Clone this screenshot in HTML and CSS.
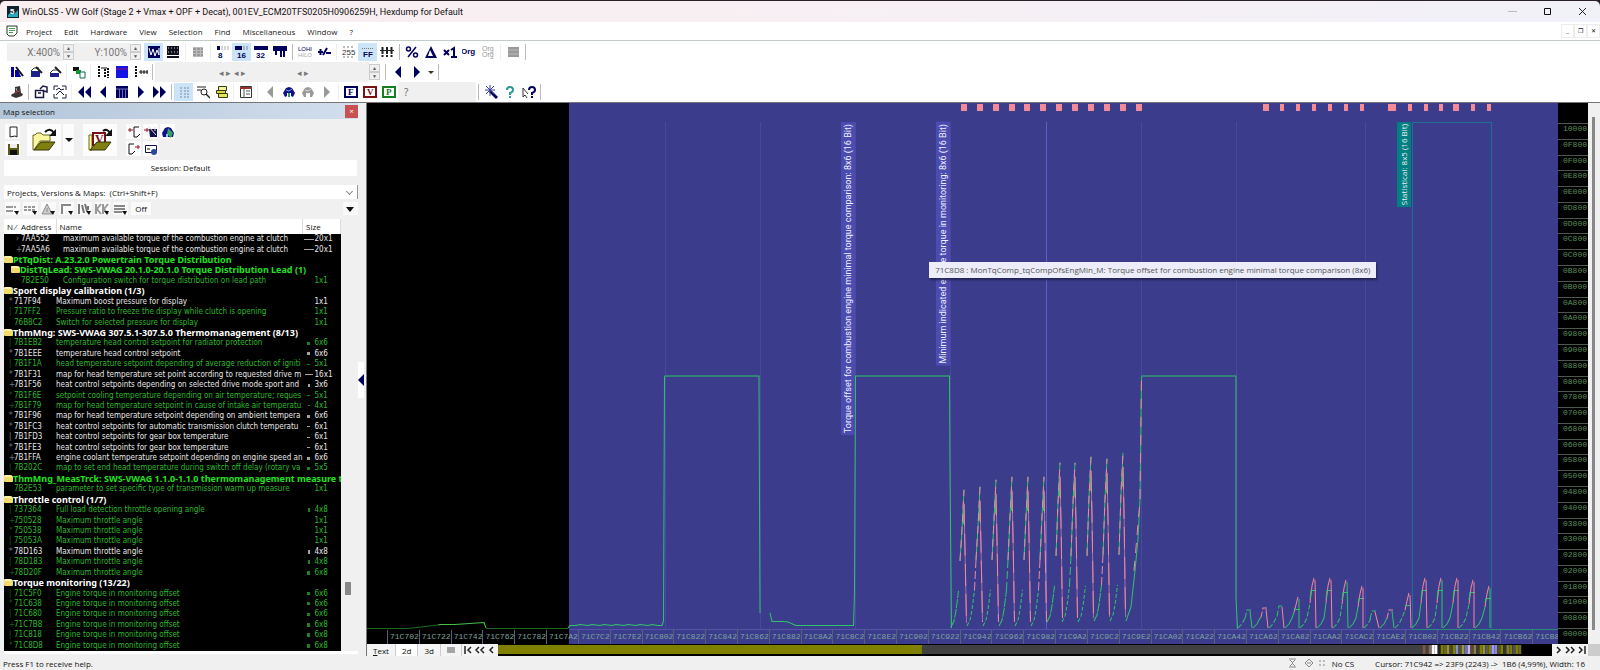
FILE: index.html
```html
<!DOCTYPE html>
<html lang="en">
<head>
    <meta charset="UTF-8">
    <title>WinOLS5 - VW Golf</title>
    <link rel="stylesheet" href="styles.css">
</head>
<body>
<div class="window">
    <header class="titlebar">
        <svg class="logo" viewBox="0 0 12 12"><rect width="12" height="12" fill="#10202c"/><path d="M1 9l3-3 3 2 4-4v7H1z" fill="#2aa7b8"/><text x="3" y="8" font-size="8" font-weight="bold" fill="#fff">5</text></svg>
        <h1>WinOLS5 - VW Golf (Stage 2 + Vmax + OPF + Decat), 001EV_ECM20TFS0205H0906259H, Hexdump for Default</h1>
        <div class="winbtns">
            <button aria-label="Minimize"><svg viewBox="0 0 9 9"><path d="M0 4.500h9" stroke="#bbb"/></svg></button>
            <button aria-label="Maximize"><svg viewBox="0 0 9 9"><path d="M1.500 1.500h6v6h-6z" fill="none" stroke="#111"/></svg></button>
            <button aria-label="Close"><svg viewBox="0 0 9 9"><path d="M1 1l7 7M8 1L1 8" stroke="#222"/></svg></button>
        </div>
    </header>

    <nav class="menubar">
        <svg class="docicon" viewBox="0 0 12 12"><path d="M1 1h10v7l-3 3H3L1 9z" fill="#fff" stroke="#243a24"/><path d="M3 3.500h6M3 5.500h6M3 7.500h4" stroke="#4a9a4a"/></svg>
        <a href="#">Project</a>
        <a href="#">Edit</a>
        <a href="#">Hardware</a>
        <a href="#">View</a>
        <a href="#">Selection</a>
        <a href="#">Find</a>
        <a href="#">Miscellaneous</a>
        <a href="#">Window</a>
        <a href="#">?</a>
        <div class="mdibtns">
            <button aria-label="Minimize child">_</button>
            <button aria-label="Restore child">❐</button>
            <button aria-label="Close child">✕</button>
        </div>
    </nav>

    <div class="toolbars">
        <div class="strip strip-a">
            <label class="zoomfield">X:<input type="text" value="400%"></label>
            <span class="spin"><button aria-label="X up">▲</button><button aria-label="X down">▼</button></span>
            <label class="zoomfield">Y:<input type="text" value="100%"></label>
            <span class="spin"><button aria-label="Y up">▲</button><button aria-label="Y down">▼</button></span>
            <i class="gap"></i>
            <button class="tb on" aria-label="Curve"><svg viewBox="0 0 14 14"><path d="M1 1h12v12H1z" fill="#00005c"/><path d="M2 3l2 7 2-6 2 7 2-6 2 5V3" fill="none" stroke="#fff"/></svg></button>
            <button class="tb" aria-label="Bars"><svg viewBox="0 0 14 14"><path d="M1 1h12v12H1z" fill="#101020"/><path d="M2 3h10M2 7h10" stroke="#ccc" stroke-dasharray="1 2"/><path d="M1 10.500h12" stroke="#fff"/></svg></button>
            <i class="sep"></i>
            <button class="tb" aria-label="Columns"><svg viewBox="0 0 14 14"><path d="M2 2h10v10H2z" fill="#bbb"/><path d="M2 4h10M2 7h10M2 10h10" stroke="#777" stroke-dasharray="3 1"/></svg></button>
            <i class="sep"></i>
            <button class="tb" aria-label="8 bit"><svg viewBox="0 0 14 14"><path d="M1 1h3v4H1z"/><path d="M5 2h9M5 4h9" stroke="#aaa" stroke-dasharray="2 1"/><text x="2" y="13" font-size="8" font-weight="bold">8</text></svg></button>
            <button class="tb on" aria-label="16 bit"><svg viewBox="0 0 14 14"><path d="M0 1h7v4H0z"/><path d="M8 2h6M8 4h6" stroke="#888" stroke-dasharray="2 1"/><text x="2" y="13" font-size="8" font-weight="bold">16</text></svg></button>
            <button class="tb" aria-label="32 bit"><svg viewBox="0 0 14 14"><path d="M0 1h14v4H0z"/><text x="2" y="13" font-size="8" font-weight="bold">32</text></svg></button>
            <button class="tb" aria-label="Float"><svg viewBox="0 0 14 14"><path d="M0 1h14v5H0z"/><path d="M3 6v4M8 6v6M11 6v6" stroke="#00005c" stroke-width="2"/></svg></button>
            <i class="sep line"></i>
            <button class="tb" aria-label="Low high"><svg viewBox="0 0 14 14"><text x="0" y="6" font-size="6">LOHI</text><text x="0" y="12" font-size="6" fill="#aaa">HILO</text></svg></button>
            <button class="tb" aria-label="Sign"><svg viewBox="0 0 14 14"><path d="M1 7h5M3.500 4v6M6 10l4-7M9 8h5" stroke="#00005c" stroke-width="2"/></svg></button>
            <i class="sep"></i>
            <button class="tb" aria-label="Decimal"><svg viewBox="0 0 14 14"><path d="M1 2h12M1 12h12" stroke="#777" stroke-dasharray="2 2"/><text x="0" y="10" font-size="8" fill="#333">255</text></svg></button>
            <button class="tb on" aria-label="Hex"><svg viewBox="0 0 14 14"><path d="M1 3.500h12" stroke="#777" stroke-dasharray="1 1"/><text x="2" y="12" font-size="8" font-weight="bold">FF</text></svg></button>
            <button class="tb" aria-label="Binary"><svg viewBox="0 0 14 14"><path d="M2.500 2v10M7 2v10M11.500 2v10" stroke="#222" stroke-width="2" stroke-dasharray="3 1"/><path d="M0 5.500h14" stroke="#222"/></svg></button>
            <i class="sep line"></i>
            <button class="tb" aria-label="Percent"><svg viewBox="0 0 14 14"><path d="M3 12L11 2" stroke="#00005c" stroke-width="1.500"/><circle cx="3.500" cy="4" r="2" fill="none" stroke="#00005c" stroke-width="1.500"/><circle cx="10.500" cy="10" r="2" fill="none" stroke="#00005c" stroke-width="1.500"/></svg></button>
            <button class="tb" aria-label="Delta"><svg viewBox="0 0 14 14"><path d="M7 1l6 12H1zM6 5l-2 6h5z" fill-rule="evenodd"/></svg></button>
            <button class="tb" aria-label="Factor"><svg viewBox="0 0 14 14"><path d="M1 5l5 5M6 5l-5 5M8 5l3-2v9M8 12h6" fill="none" stroke="#00005c" stroke-width="2"/></svg></button>
            <button class="tb" aria-label="Original"><svg viewBox="0 0 14 14"><text x="-1" y="9" font-size="8" font-weight="bold">Org</text></svg></button>
            <button class="tb" aria-label="Original both"><svg viewBox="0 0 14 14"><text x="1" y="6" font-size="7" fill="#999">Org</text><text x="1" y="12" font-size="7" fill="#999">Org</text></svg></button>
            <i class="sep"></i>
            <button class="tb" aria-label="List"><svg viewBox="0 0 14 14"><path d="M2 2h11v10H2z" fill="#999"/><path d="M2 5h11M2 9h11" stroke="#bbb"/></svg></button>
            <i class="sep line"></i>
        </div>

        <div class="strip strip-b">
            <button class="tb" aria-label="Wizard"><svg viewBox="0 0 14 14"><path d="M1 2h3v10H1zM5 5h3l3 7H5z" fill="#0000a0"/><path d="M6 2l7 9" stroke="#111" stroke-width="2"/></svg></button>
            <button class="tb" aria-label="Open map"><svg viewBox="0 0 14 14"><path d="M2 6h9v6H2z" fill="#20208c"/><path d="M2 6l3-3h5" fill="none" stroke="#333"/><path d="M7 2l6 6" stroke="#222" stroke-width="2"/></svg></button>
            <button class="tb" aria-label="Next map"><svg viewBox="0 0 14 14"><path d="M2 8h9v4H2z" fill="#20208c"/><path d="M2 8l3-3h4" fill="none" stroke="#333"/><path d="M7 2l6 6" stroke="#222" stroke-width="2"/></svg></button>
            <i class="sep"></i>
            <button class="tb" aria-label="Copy"><svg viewBox="0 0 14 14"><path d="M1 2h6v4H1z" fill="#111"/><path d="M4 5h5v4H4z" fill="#0a9a2a"/><path d="M8 7h5v6H8z" fill="#fff" stroke="#0a6a5a"/></svg></button>
            <i class="sep"></i>
            <button class="tb" aria-label="Swap"><svg viewBox="0 0 14 14"><path d="M3 1v12M9 4v9M12 3v10" stroke="#111" stroke-width="2" stroke-dasharray="2 1"/><path d="M5 3h6" stroke="#111"/></svg></button>
            <button class="tb" aria-label="Fill"><svg viewBox="0 0 14 14"><path d="M1 1h12v12H1z" fill="#1414e6"/><path d="M1 4h12" stroke="#901070"/></svg></button>
            <button class="tb" aria-label="Insert"><svg viewBox="0 0 14 14"><path d="M2 1v12" stroke="#111" stroke-width="2" stroke-dasharray="2 1"/><path d="M5 7h9M7 5v4M10 5v4M13 5v4" stroke="#111"/></svg></button>
            <i class="sep line"></i>
            <div class="slot"><span>◂ ▸ ◂ ▸</span><span>◂ ▸</span></div>
            <span class="spin"><button aria-label="Step up">▲</button><button aria-label="Step down">▼</button></span>
            <i class="gap"></i>
            <i class="sep line"></i>
            <button class="tb" aria-label="Previous"><svg viewBox="0 0 14 14"><path d="M10 1v12L4 7z"/></svg></button>
            <button class="tb" aria-label="Next"><svg viewBox="0 0 14 14"><path d="M4 1v12l6-6z"/></svg></button>
            <button class="tb slim" aria-label="More"><svg viewBox="0 0 14 14"><path d="M4 6h6l-3 3z" fill="#333"/></svg></button>
            <i class="sep line"></i>
        </div>

        <div class="strip strip-c">
            <button class="tb" aria-label="Agent"><svg viewBox="0 0 14 14"><path d="M5 2l5-1 1 7 2 1-1 2-6 2-5-2 1-2 3-1z" fill="#3a3434"/><path d="M4 8l6-2" stroke="#a04040"/><path d="M6 3l1 3" stroke="#aaa"/></svg></button>
            <i class="sep line"></i>
            <button class="tb" aria-label="Properties"><svg viewBox="0 0 14 14"><path d="M1.500 5.500h8v7h-8zM4 8h3M6 4l3-3 4 1v5l-3-1" fill="none" stroke="#1a1a40" stroke-width="1.500"/></svg></button>
            <button class="tb" aria-label="Picture"><svg viewBox="0 0 14 14"><path d="M1 1h4M9 1h4M1 13h4M9 13h4M1 1v4M1 9v4M13 1v4M13 9v4M3 5l3-2 2 2 3-1M3 10l4-4 4 4" fill="none" stroke="#1a1a40"/></svg></button>
            <i class="sep"></i>
            <button class="tb" aria-label="First"><svg viewBox="0 0 14 14"><path d="M7 1v12L1 7zM14 1v12L8 7z"/></svg></button>
            <button class="tb" aria-label="Back"><svg viewBox="0 0 14 14"><path d="M10 1v12L4 7z"/></svg></button>
            <button class="tb" aria-label="Map grid"><svg viewBox="0 0 14 14"><path d="M1 1h12v12H1z"/><path d="M1 4h12M4.500 4v9M7.500 4v9M10.500 4v9" stroke="#6a6ab8"/></svg></button>
            <button class="tb" aria-label="Forward"><svg viewBox="0 0 14 14"><path d="M4 1v12l6-6z"/></svg></button>
            <button class="tb" aria-label="Last"><svg viewBox="0 0 14 14"><path d="M0 1v12l6-6zM7 1v12l6-6z"/></svg></button>
            <i class="sep line"></i>
            <button class="tb on" aria-label="Tree"><svg viewBox="0 0 14 14"><path d="M4 2v11M7 3h6M7 6h6M7 9h6M7 12h6" stroke="#7a8aa8" stroke-dasharray="2 1"/></svg></button>
            <button class="tb" aria-label="Search list"><svg viewBox="0 0 14 14"><path d="M1 2h9M1 5h4" stroke="#222"/><circle cx="8" cy="7" r="3" fill="none" stroke="#222"/><path d="M10 9l4 4" stroke="#222" stroke-width="1.500"/></svg></button>
            <button class="tb" aria-label="Print"><svg viewBox="0 0 14 14"><path d="M3.500 1.500h8v4h-8z" fill="#f4f2a0" stroke="#333a10"/><path d="M1.500 5.500h9v3h-9z" fill="#d8d640" stroke="#333a10"/><path d="M3.500 8.500h9v4h-9z" fill="#e6e45a" stroke="#333a10"/></svg></button>
            <i class="sep"></i>
            <button class="tb" aria-label="Window layout"><svg viewBox="0 0 14 14"><path d="M1.500 1.500h11v11h-11z" fill="#fff" stroke="#333"/><path d="M1 3h12" stroke="#933" stroke-width="2"/><path d="M5 4v9M7 6h4M7 9h4" stroke="#555"/></svg></button>
            <i class="sep"></i>
            <button class="tb" aria-label="Find previous"><svg viewBox="0 0 14 14"><path d="M10 1v12L4 7z" fill="#999"/></svg></button>
            <button class="tb" aria-label="Find"><svg viewBox="0 0 14 14"><path d="M1 8l3-5 3-1 3 1 3 5-2 4-2-1V8H5v3l-2 1z" fill="#10108a"/><path d="M6 8h2v4H6z" fill="#3a9a6a"/><path d="M4 5l3 1 3-2" stroke="#7ab" fill="none"/></svg></button>
            <button class="tb" aria-label="Find again"><svg viewBox="0 0 14 14"><path d="M1 8l3-5 3-1 3 1 3 5-2 4H9V8H5v4H3z" fill="#999"/><path d="M4 5l3 1 3-2" stroke="#ddd" fill="none"/></svg></button>
            <button class="tb" aria-label="Find next"><svg viewBox="0 0 14 14"><path d="M4 1v12l6-6z" fill="#999"/></svg></button>
            <i class="sep"></i>
            <button class="tb" aria-label="F window"><svg viewBox="0 0 14 14"><path d="M1 2h12v10H1z" fill="#fff" stroke="#00005c" stroke-width="2"/><text class="srf" x="4" y="10" font-size="9" font-weight="bold">F</text></svg></button>
            <button class="tb" aria-label="V window"><svg viewBox="0 0 14 14"><path d="M1 2h12v10H1z" fill="#fff" stroke="#7a1018" stroke-width="2"/><text class="srf" x="4" y="10" font-size="9" font-weight="bold" fill="#7a1018">V</text></svg></button>
            <button class="tb" aria-label="P window"><svg viewBox="0 0 14 14"><path d="M1 2h12v10H1z" fill="#fff" stroke="#108020" stroke-width="2"/><text class="srf" x="4" y="10" font-size="9" font-weight="bold" fill="#108020">P</text></svg></button>
            <span class="query">?</span>
            <i class="sep line"></i>
            <button class="tb" aria-label="Magic"><svg viewBox="0 0 14 14"><path d="M6 6l7 7" stroke="#00005c" stroke-width="3"/><path d="M6 0v11M1 5h10M2 1l8 8M10 1L2 9" stroke="#3a3aa0"/></svg></button>
            <button class="tb" aria-label="Help"><svg viewBox="0 0 14 14"><path d="M4 5q0-3 3-3t3 3q0 2-3 3v2M7 11v2" fill="none" stroke="#2a9a98" stroke-width="2"/></svg></button>
            <button class="tb" aria-label="Context help"><svg viewBox="0 0 14 14"><path d="M1 3v9l2-2 2 3M1 3l5 6" fill="none" stroke="#333"/><path d="M7 5q0-3 3-3t3 3q0 2-3 3v2M10 11v2" fill="none" stroke="#00005c" stroke-width="2"/></svg></button>
            <i class="sep line"></i>
        </div>
    </div>

    <main class="work">
        <aside class="panel">
            <div class="panelhead"><h2>Map selection</h2><button aria-label="Close panel">×</button></div>
            <div class="panelbody">
                <div class="actions">
                    <div class="stack">
                        <button class="sm" aria-label="New"><svg viewBox="0 0 14 14"><path d="M4 2h7v10l-2-1-5 1z" fill="#fff" stroke="#222"/></svg></button>
                        <button class="sm" aria-label="Save"><svg viewBox="0 0 14 14"><path d="M2 2h11v11H2z" fill="#5a5a10"/><path d="M4 2h7v4H4z" fill="#eee"/><path d="M4 8h7v5H4z" fill="#111"/></svg></button>
                    </div>
                    <button class="big" aria-label="Open project"><svg viewBox="0 0 26 26"><path d="M2 8h2l2-2h4l2 2h7v6H9l-6 9H2z" fill="#fbf6a0" stroke="#6a6a1a"/><path d="M3 23l7-8h14l-6 8z" fill="#808010" stroke="#33330a"/><path d="M14 5q5-5 9 1" fill="none" stroke="#111" stroke-width="2"/><path d="M25 2v7h-7z" fill="#111"/></svg></button>
                    <button class="drop" aria-label="Recent"><svg viewBox="0 0 10 10"><path d="M1 3h8L5 7z" fill="#111"/></svg></button>
                    <button class="big ver" aria-label="Open version"><svg viewBox="0 0 26 26"><path d="M2 8h3v15H2z" fill="#fbf6a0" stroke="#6a6a1a"/><path d="M6 6h12v12H6z" fill="#fff" stroke="#7a1018" stroke-width="2"/><text class="srf" x="8" y="16" font-size="12" fill="#7a1018" font-weight="bold">V</text><path d="M3 23l7-8h14l-6 8z" fill="#808010" stroke="#33330a"/><path d="M16 4q4-3 7 2" fill="none" stroke="#111" stroke-width="2"/><path d="M25 2v7h-7z" fill="#111"/></svg></button>
                    <div class="quad">
                        <button class="sm" aria-label="Import"><svg viewBox="0 0 14 14"><path d="M12 2H7v10h3M10 12l3-3" fill="none" stroke="#111"/><path d="M1 5h5M3 3v4" stroke="#a01020"/></svg></button>
                        <button class="sm" aria-label="Import wizard"><svg viewBox="0 0 14 14"><path d="M5 4h8v8H6z" fill="#10104a"/><path d="M5 2l7 8M11 2v4" stroke="#ddd"/><path d="M0 5h5M3 3v4" stroke="#a01020"/></svg></button>
                        <button class="sm" aria-label="Find map"><svg viewBox="0 0 14 14"><path d="M1 8l3-5 3-1 3 1 3 5-1 4H2z" fill="#10108a"/><path d="M7 3l5 5-2 5-4-4z" fill="#35a55a"/><path d="M5 9h2v3H5z" fill="#8cf"/></svg></button>
                        <button class="sm" aria-label="Export"><svg viewBox="0 0 14 14"><path d="M7 2H2v10h3l3-3" fill="none" stroke="#111"/><path d="M8 5h5M11 3v4" stroke="#a01020"/></svg></button>
                        <button class="sm" aria-label="Mail"><svg viewBox="0 0 14 14"><path d="M1.500 3.500h11v7h-11z" fill="#fff" stroke="#10104a"/><path d="M3 6h3v2H3z" fill="#888"/><circle cx="10" cy="10" r="3" fill="#2a4aa0"/></svg></button>
                    </div>
                </div>
                <div class="session">Session: Default</div>
                <div class="combo"><select aria-label="Filter"><option>Projects, Versions &amp; Maps:&nbsp; (Ctrl+Shift+F)</option></select></div>
                <div class="filters">
                    <button aria-label="Equal"><svg viewBox="0 0 14 12"><path d="M1 4h7M1 8h7M10 3v2" stroke="#999" stroke-width="2"/><path d="M9 8h5l-2 4z" fill="#111"/></svg></button>
                    <button aria-label="Ruler"><svg viewBox="0 0 14 12"><path d="M1 4h11M1 7h11" stroke="#999" stroke-width="2" stroke-dasharray="3 1"/><path d="M9 8h5l-2 4z" fill="#111"/></svg></button>
                    <button aria-label="Difference"><svg viewBox="0 0 14 12"><path d="M6 1l5 10H1zM6 5v4" fill="#ccc" stroke="#888"/><path d="M9 8h5l-2 4z" fill="#111"/></svg></button>
                    <button aria-label="Shape"><svg viewBox="0 0 14 12"><path d="M3 11V2h9" fill="none" stroke="#888" stroke-width="2"/><path d="M9 8h5l-2 4z" fill="#111"/></svg></button>
                    <button aria-label="Flags"><svg viewBox="0 0 14 12"><path d="M2 1v10M5 2l2 8M8 1l2 7M11 3v4" stroke="#777" stroke-width="2"/><path d="M9 8h5l-2 4z" fill="#111"/></svg></button>
                    <button aria-label="Kinds"><svg viewBox="0 0 14 12"><path d="M1 1v10M6 1L2 6l4 5M8 1v10M13 1L9 6l4 5" fill="none" stroke="#999" stroke-width="2"/><path d="M9 8h5l-2 4z" fill="#111"/></svg></button>
                    <button aria-label="Lines"><svg viewBox="0 0 14 12"><path d="M1 3h11M1 6h11M1 9h8" stroke="#888" stroke-width="2"/><path d="M9 8h5l-2 4z" fill="#111"/></svg></button>
                    <button class="off">Off</button>
                    <button class="last" aria-label="Filter menu"><svg viewBox="0 0 14 12"><path d="M3 4h8l-4 5z" fill="#111"/></svg></button>
                </div>
                <div class="listwrap">
                    <div class="list">
                        <table>
                            <colgroup><col class="caddr"><col><col class="csize"></colgroup>
                            <thead><tr><th><i>N ⁄</i>Address</th><th>Name</th><th>Size</th></tr></thead>
                            <tbody id="maps"></tbody>
                        </table>
                    </div>
                    <div class="vscroll"><i></i></div>
                </div>
            </div>
        </aside>
        <button class="splitter" aria-label="Collapse panel"><svg viewBox="0 0 6 36"><path d="M0 0h6v36H0z" fill="#fff"/><path d="M6 12v12L0 18z" fill="#00005c"/></svg></button>

        <section class="view">
            <div class="chartrow">
                <div class="chart">
                    <svg id="plot" viewBox="0 0 1191 526" preserveAspectRatio="none"></svg>
                    <div class="xaxis" id="xaxis"></div>
                    <span class="vlabel v1">Torque offset for combustion engine minimal torque comparison: 8x6 (16 Bit)</span>
                    <span class="vlabel v2">Minimum indicated engine torque in monitoring: 8x6 (16 Bit)</span>
                    <span class="vlabel v3">Statistical: 8x5 (16 Bit)</span>
                    <div class="tip">71C8D8 : MonTqComp_tqCompOfsEngMin_M: Torque offset for combustion engine minimal torque comparison (8x6)</div>
                </div>
                <div class="yaxis" id="yaxis"></div>
                <div class="rscroll"><i></i></div>
            </div>
            <div class="tabs">
                <button class="tab"><u>T</u>ext</button>
                <button class="tab cur">2d</button>
                <button class="tab">3d</button>
                <button class="tab" aria-label="Tab list"><svg viewBox="0 0 8 6"><path d="M0 1h8M0 3h8M0 5h8" stroke="#555"/></svg></button>
                <button class="nav" aria-label="First"><svg viewBox="0 0 10 10"><path d="M2 1v8M8 2L5 5l3 3" fill="none" stroke="#222" stroke-width="1.500"/></svg></button>
                <button class="nav" aria-label="Page back"><svg viewBox="0 0 10 10"><path d="M4 2L1 5l3 3M9 2L6 5l3 3" fill="none" stroke="#222" stroke-width="1.500"/></svg></button>
                <button class="nav" aria-label="Step back"><svg viewBox="0 0 10 10"><path d="M6 2L3 5l3 3" fill="none" stroke="#222" stroke-width="1.500"/></svg></button>
                <svg class="overview" id="overview" viewBox="0 0 1059 12" preserveAspectRatio="none"></svg>
                <button class="nav" aria-label="Step forward"><svg viewBox="0 0 10 10"><path d="M4 2l3 3-3 3" fill="none" stroke="#222" stroke-width="1.500"/></svg></button>
                <button class="nav" aria-label="Page forward"><svg viewBox="0 0 10 10"><path d="M1 2l3 3-3 3M6 2l3 3-3 3" fill="none" stroke="#222" stroke-width="1.500"/></svg></button>
                <button class="nav" aria-label="End"><svg viewBox="0 0 10 10"><path d="M2 2l3 3-3 3M8 1v8" fill="none" stroke="#222" stroke-width="1.500"/></svg></button>
                <i class="corner"></i>
            </div>
        </section>
    </main>

    <footer class="status">
        <span class="msg">Press F1 to receive help.</span>
        <svg viewBox="0 0 40 10"><path d="M1 1h7M1 9h7M2 2l3 3-3 3M7 2L4 5M7 8L4 5M17 5l4-4 4 4-4 4zM19 5h4M32 2v2M36 2v2M32 6v2M36 6v2" fill="none" stroke="#888"/></svg>
        <span class="cs">No CS</span>
        <span>Cursor: 71C942 =&gt; 23F9 (2243) -&gt;&nbsp; 1B6 (4,99%), Width: 16</span>
    </footer>
</div>
<script src="script.js"></script>
</body>
</html>
```
FILE: styles.css
```css
* {
    box-sizing: border-box;
    margin: 0;
    padding: 0;
}
body {
    background: #2a2028;
    font-family: "Open Sans", "Noto Sans", sans-serif;
    font-size: 8px;
    color: #111;
}
button, input, select {
    font: inherit;
    color: inherit;
    border: 0;
    background: none;
}
svg {
    display: block;
}
i {
    font-style: normal;
}
.window {
    display: flex;
    flex-direction: column;
    height: 100vh;
    padding-top: 1px;
}

/* title + menu */
.titlebar {
    display: flex;
    align-items: center;
    height: 21px;
    padding-left: 7px;
    background: linear-gradient(to right, #f9eef0, #f8eff2 40%, #f1f1f8);
    border-radius: 5px 5px 0 0;
}
.logo {
    width: 12px;
    height: 12px;
    margin-right: 3px;
}
.logo text {
    font-family: "Liberation Sans", sans-serif;
}
h1, h2 {
    font-size: 8px;
    font-weight: normal;
}
h1 {
    font-family: Roboto, "Open Sans", sans-serif;
    font-size: 9px;
}
.winbtns {
    display: flex;
    margin-left: auto;
}
.winbtns button {
    width: 35px;
    padding: 0 13px;
}
.menubar {
    display: flex;
    align-items: center;
    height: 19px;
    padding-left: 6px;
    background: #fff;
    border-bottom: 1px solid #c4ccc8;
}
.docicon {
    width: 12px;
    height: 12px;
    margin-right: 8px;
}
.menubar a {
    margin-right: 12px;
    color: #222;
    text-decoration: none;
}
.mdibtns {
    display: flex;
    margin-left: auto;
}
.mdibtns button {
    width: 13px;
    font-size: 6px;
    line-height: 12px;
    border: 1px solid #eee;
}

/* toolbars */
.toolbars {
    padding-top: 1px;
    background: #fff;
    border-bottom: 1px solid #777;
}
.strip {
    display: flex;
    align-items: center;
    height: 20px;
    padding-left: 7px;
}
.tb {
    display: flex;
    align-items: center;
    justify-content: center;
    width: 19px;
    height: 18px;
}
.tb.on {
    background: #cce4f7;
}
.tb.slim {
    width: 10px;
}
.tb svg {
    flex: none;
    width: 14px;
    height: 14px;
    fill: #00005c;
}
.tb text {
    font-family: "Liberation Sans", sans-serif;
}
.tb .srf, .big .srf {
    font-family: "Liberation Serif", serif;
}
.sep {
    align-self: stretch;
    width: 1px;
    margin: 2px 2px 2px 3px;
    background: #eee;
}
.strip-b .sep, .strip-c .sep {
    margin: 2px;
}
.sep.line {
    background: #bbb;
}
.gap {
    width: 3px;
}
.zoomfield {
    display: flex;
    align-items: center;
    justify-content: flex-end;
    width: 56px;
    height: 18px;
    padding-right: 3px;
    background: #f0f0f0;
    color: #777;
    font-family: Roboto, "Open Sans", sans-serif;
    font-size: 10px;
}
.zoomfield input {
    width: 24px;
}
.spin {
    display: flex;
    flex-direction: column;
    width: 11px;
    background: #f0f0f0;
}
.spin button {
    height: 8px;
    border: 1px solid #ccc;
    color: #555;
    font-size: 5px;
    line-height: 6px;
}
.slot {
    display: flex;
    justify-content: space-between;
    align-self: stretch;
    width: 214px;
    padding: 4px 60px 0 64px;
    background: #f0f0f0;
    color: #777;
    font-size: 9px;
}
.query {
    align-self: stretch;
    width: 78px;
    padding: 3px 6px;
    background: #f0f0f0;
    font-size: 10px;
    color: #666;
}

/* left panel */
.work {
    display: flex;
    flex: 1;
    min-height: 0;
    background: #f0f0f0;
}
.panel {
    display: flex;
    flex-direction: column;
    flex: none;
    width: 358px;
}
.panelhead {
    display: flex;
    align-items: center;
    justify-content: space-between;
    height: 16px;
    padding: 0 0 0 3px;
    background: linear-gradient(to right, #b4c6da, #d2deec);
}
.panelhead button {
    width: 13px;
    height: 13px;
    background: #c75050;
    color: #fff;
    line-height: 12px;
}
.panelbody {
    display: flex;
    flex-direction: column;
    flex: 1;
    min-height: 0;
    padding: 5px 0 2px 4px;
}
.actions {
    display: flex;
    align-items: center;
    height: 32px;
    margin: 0 0 4px 1px;
}
.actions button {
    display: flex;
    align-items: center;
    justify-content: center;
    background: #fcfcfc;
}
.sm {
    width: 15px;
    height: 15px;
}
.sm svg {
    width: 14px;
    height: 14px;
}
.stack {
    display: grid;
    gap: 2px;
    margin-right: 7px;
}
.big {
    width: 34px;
    height: 32px;
}
.big svg {
    width: 26px;
    height: 26px;
}
.drop {
    width: 11px;
    height: 32px;
    margin: 0 9px 0 2px;
}
.drop svg {
    width: 10px;
    height: 10px;
}
.quad {
    display: grid;
    grid-template-columns: repeat(3, 15px);
    gap: 2px;
    margin-left: 9px;
}
.session {
    height: 16px;
    margin-right: 1px;
    background: #fff;
    text-align: center;
    line-height: 16px;
}
.combo {
    position: relative;
    height: 14px;
    margin: 9px 0 3px;
    background: #fff;
    border-right: 1px solid #999;
}
.combo select {
    appearance: none;
    width: 100%;
    height: 14px;
    padding-left: 3px;
}
.combo::after {
    content: "";
    position: absolute;
    top: 4px;
    right: 5px;
    width: 4px;
    height: 4px;
    border: solid #888;
    border-width: 0 1px 1px 0;
    transform: rotate(45deg);
}
.filters {
    display: flex;
    gap: 3px;
    height: 13px;
    margin: 0 0 4px 1px;
}
.filters button {
    width: 15px;
    background: #fafafa;
}
.filters svg {
    width: 14px;
    height: 12px;
}
.filters .off {
    width: 20px;
    line-height: 12px;
}
.filters .last {
    margin-left: auto;
}
.listwrap {
    display: flex;
    flex: 1;
    min-height: 0;
    border-bottom: 3px solid #fff;
}
.list {
    flex: 1;
    background: #000;
    overflow: hidden;
}
.list table {
    width: 100%;
    height: 100%;
    table-layout: fixed;
    border-collapse: collapse;
    font-family: "DejaVu Sans Condensed", "DejaVu Sans", sans-serif;
    font-size: 8px;
    line-height: 10px;
}
.caddr {
    width: 52px;
}
.csize {
    width: 38px;
}
.list th {
    height: 15px;
    padding-left: 3px;
    background: #fff;
    border-right: 1px solid #ddd;
    font-family: "Open Sans", "Noto Sans", sans-serif;
    font-weight: normal;
    text-align: left;
    white-space: nowrap;
}
.list th i {
    display: inline-block;
    width: 14px;
}
.list td {
    overflow: hidden;
    white-space: nowrap;
    color: #e8e8e8;
}
.list .g td {
    color: #2cb82c;
}
.list .grp td {
    overflow: visible;
    color: #fff;
    font-family: "Noto Sans", sans-serif;
    font-size: 9px;
    font-weight: bold;
}
.list .grp.g td {
    color: #20e020;
}
.list td.sub {
    padding-left: 7px;
}
.mark {
    display: inline-block;
    width: 10px;
    padding-left: 5px;
    opacity: .5;
}
.folder {
    display: inline-block;
    width: 9px;
    height: 7px;
    background: #f4dc6c;
    border-top: 2px solid #fff3a8;
    border-radius: 1px 3px 1px 1px;
}
.dim {
    display: flex;
    align-items: center;
}
.dim i {
    display: flex;
    align-items: center;
    justify-content: center;
    width: 12px;
}
.dim b {
    background: currentColor;
    opacity: .7;
}
.vscroll {
    width: 17px;
    padding: 363px 0 0 4px;
}
.vscroll i {
    display: block;
    width: 6px;
    height: 13px;
    background: #888;
}
.splitter {
    flex: none;
    width: 8px;
}
.splitter svg {
    width: 6px;
    height: 36px;
}

/* chart */
.view {
    display: flex;
    flex-direction: column;
    flex: 1;
    min-width: 0;
    border-left: 1px solid #777;
}
.chartrow {
    display: flex;
    flex: 1;
    min-height: 0;
}
.chart {
    position: relative;
    display: flex;
    flex-direction: column;
    flex: 1;
    min-width: 0;
    background: linear-gradient(to right, #000 17%, #3c3c8c 17%);
}
#plot {
    flex: 1;
    width: 100%;
    min-height: 0;
}
.xaxis {
    display: flex;
    height: 14px;
    padding-left: 20px;
    overflow: hidden;
}
.xaxis span {
    flex: 0 0 2.714%;
    padding-left: 2px;
    border-left: 1px solid #55607a;
    color: #7fa39b;
    font: 8px/13px "Liberation Mono", monospace;
}
.yaxis {
    display: flex;
    flex-direction: column;
    width: 30px;
    padding-top: 20px;
    background: #000;
}
.yaxis span {
    flex: 1;
    min-height: 0;
    padding-left: 5px;
    border-top: 1px solid #4c584c;
    color: #5c8c5c;
    font: 8px/9px "Liberation Mono", monospace;
}
.rscroll {
    width: 12px;
    padding: 14px 0 14px 4px;
}
.rscroll i {
    display: block;
    width: 3px;
    height: 100%;
    background: #888;
}
.vlabel {
    position: absolute;
    top: 19px;
    padding: 2px 0;
    background: #4c4cb0;
    color: #f0f0ff;
    font-family: Roboto, "Open Sans", sans-serif;
    font-size: 9px;
    line-height: 14px;
    white-space: nowrap;
    writing-mode: vertical-rl;
    transform: rotate(180deg);
}
.v1 {
    left: 39.8%;
}
.v2 {
    left: 47.8%;
}
.v3 {
    left: 86.5%;
    background: #008080;
    font-family: "Open Sans", "Noto Sans", sans-serif;
    font-size: 8px;
}
.tip {
    position: absolute;
    top: 159px;
    left: 47.2%;
    padding: 0 6px;
    background: #ededfa;
    color: #555;
    line-height: 16px;
    white-space: nowrap;
    box-shadow: 1px 2px 2px #222255;
}
.tabs {
    display: flex;
    align-items: center;
    height: 12px;
    background: #f4f4f4;
}
.tab {
    height: 12px;
    padding: 0 6px;
    line-height: 11px;
    border-right: 1px solid #ccc;
}
.tab.cur {
    background: #fff;
}
.tab svg {
    width: 8px;
    height: 6px;
}
.nav {
    width: 12px;
    padding: 0 1px;
}
.nav svg {
    width: 10px;
    height: 10px;
}
.overview {
    flex: 1;
    min-width: 0;
    height: 12px;
}
.corner {
    width: 12px;
    height: 12px;
    background: #ccc;
}
.status {
    display: flex;
    align-items: center;
    height: 14px;
    padding: 0 15px 0 3px;
    background: #f0f0f0;
}
.status svg {
    width: 40px;
    height: 10px;
}
.msg {
    flex: 1;
}
.cs {
    margin: 0 21px 0 4px;
}
```
FILE: script.js
```js
// type, address, name, size, mark   (G = green, W = white, F = folder white, FG = folder green)
var maps = [
    ['W', '7AA552', 'maximum available torque of the combustion engine at clutch', '20x1', '›', 1],
    ['W', '7AA5A6', 'maximum available torque of the combustion engine at clutch', '20x1', '+', 1],
    ['FG', 'PtTqDist: A.23.2.0 Powertrain Torque Distribution'],
    ['FG', 'DistTqLead: SWS-VWAG 20.1.0-20.1.0 Torque Distribution Lead (1)', 1],
    ['G', '7B2E50', 'Configuration switch for torque distribution on lead path', '1x1', '', 1],
    ['F', 'Sport display calibration (1/3)'],
    ['W', '717F94', 'Maximum boost pressure for display', '1x1', '*'],
    ['G', '717FF2', 'Pressure ratio to freeze the display while clutch is opening', '1x1', '|'],
    ['G', '76B8C2', 'Switch for selected pressure for display', '1x1', ''],
    ['F', 'ThmMng: SWS-VWAG 307.5.1-307.5.0 Thermomanagement (8/13)'],
    ['G', '7B1EB2', 'temperature head control setpoint for radiator protection', '6x6', '|'],
    ['W', '7B1EEE', 'temperature head control setpoint', '6x6', '*'],
    ['G', '7B1F1A', 'head temperature setpoint depending of average reduction of igniti', '5x1', '|'],
    ['W', '7B1F31', 'map for head temperature set point according to requested drive m', '16x1', '*'],
    ['W', '7B1F56', 'heat control setpoints depending on selected drive mode sport and', '3x6', '+'],
    ['G', '7B1F6E', 'setpoint cooling temperature depending on air temperature; reques', '5x1', '*'],
    ['G', '7B1F79', 'map for head temperature setpoint in cause of intake air temperatu', '4x1', '+'],
    ['W', '7B1F96', 'map for head temperature setpoint depending on ambient tempera', '6x6', '*'],
    ['W', '7B1FC3', 'heat control setpoints for automatic transmission clutch temperatu', '6x1', '*'],
    ['W', '7B1FD3', 'heat control setpoints for gear box temperature', '6x1', '|'],
    ['W', '7B1FE3', 'heat control setpoints for gear box temperature', '6x1', '*'],
    ['W', '7B1FFA', 'engine coolant temperature setpoint depending on engine speed an', '6x6', '+'],
    ['G', '7B202C', 'map to set end head temperature during switch off delay (rotary va', '5x5', '|'],
    ['FG', 'ThmMng_MeasTrck: SWS-VWAG 1.1.0-1.1.0 thermomanagement measure tra'],
    ['G', '7B2E53', 'parameter to set specific type of transmission warm up measure', '1x1', ''],
    ['F', 'Throttle control (1/7)'],
    ['G', '737364', 'Full load detection throttle opening angle', '4x8', '|'],
    ['G', '750528', 'Maximum throttle angle', '1x1', '+'],
    ['G', '750538', 'Maximum throttle angle', '1x1', '*'],
    ['G', '75053A', 'Maximum throttle angle', '1x1', '|'],
    ['W', '78D163', 'Maximum throttle angle', '4x8', '*'],
    ['G', '78D183', 'Maximum throttle angle', '4x8', '|'],
    ['G', '78D20F', 'Maximum throttle angle', '6x8', '+'],
    ['F', 'Torque monitoring (13/22)'],
    ['G', '71C5F0', 'Engine torque in monitoring offset', '6x6', '|'],
    ['G', '71C638', 'Engine torque in monitoring offset', '6x6', '*'],
    ['G', '71C680', 'Engine torque in monitoring offset', '6x6', '|'],
    ['G', '71C7B8', 'Engine torque in monitoring offset', '6x8', '+'],
    ['G', '71C818', 'Engine torque in monitoring offset', '6x8', '|'],
    ['G', '71C8D8', 'Engine torque in monitoring offset', '6x8', '*']
];

var rows = '';
for (var i = 0; i < maps.length; i++) {
    var m = maps[i];
    if (m[0].charAt(0) == 'F') {
        rows += '<tr class="grp' + (m[0] == 'FG' ? ' g' : '') + '"><td colspan="3"' + (m[2] ? ' class="sub"' : '') + '><i class="folder"></i>' + m[1] + '</td></tr>';
        continue;
    }
    var wh = m[3].split('x');
    var box = m[3] == '1x1' ? '' : '<b style="width:' + Math.round(wh[0] / 2) + 'px;height:' + Math.max(1, Math.round(wh[1] / 2)) + 'px"></b>';
    var sub = m[5] ? ' class="sub"' : '';
    rows += '<tr' + (m[0] == 'G' ? ' class="g"' : '') + '><td' + sub + '><i class="mark">' + m[4] + '</i>' + m[1] + '</td><td' + sub + '>' + m[2] + '</td><td><div class="dim"><i>' + box + '</i>' + m[3] + '</div></td></tr>';
}
document.getElementById('maps').innerHTML = rows;

// axes
var html = '';
for (var a = 0x71C702; a <= 0x71CB82; a += 0x20) {
    html += '<span>' + a.toString(16).toUpperCase() + '</span>';
}
document.getElementById('xaxis').innerHTML = html;
html = '';
for (var v = 0x10000; v >= 0; v -= 0x800) {
    html += '<span>' + ('0000' + v.toString(16).toUpperCase()).slice(-5) + '</span>';
}
document.getElementById('yaxis').innerHTML = html;

// plot
var GREEN = '#2fc468', PINK = '#f0889c';
function line(d, color, extra) {
    return '<path d="' + d + '" fill="none" stroke="' + color + '" ' + (extra || '') + '/>';
}
var out = '<g transform="translate(-367 -103)">';
var guides = [665, 760, 855, 950, 1046, 1141, 1236, 1365];
for (i = 0; i < guides.length; i++) {
    out += line('M' + guides[i] + '.5 122V629', guides[i] == 1046 ? '#6060c4' : '#4848a0');
}
out += line('M570 628.5H1558', '#5454a4');

var marks = [[964, 6], [980, 6], [996, 6], [1012, 6], [1027, 6], [1043, 6], [1059, 6], [1075, 6], [1091, 6], [1107, 6], [1123, 6], [1139, 6],
    [1266, 6], [1282, 4], [1298, 4], [1314, 4], [1330, 4], [1346, 4], [1362, 4], [1392, 8], [1410, 4], [1426, 4], [1441, 4], [1456, 6], [1473, 4], [1489, 4]];
for (i = 0; i < marks.length; i++) {
    out += '<rect x="' + (marks[i][0] - marks[i][1] / 2) + '" y="104" width="' + marks[i][1] + '" height="7" fill="#f48a96"/>';
}

// statistical map frame
out += line('M1412.5 629V122.5H1491.5V629Z', '#1f6f94');

out += line('M367 627.5H408L425 625.5 438 624', '#1c6c1c');
out += line('M438 624L440 623.5H455L484 621.5 486 627', '#45c045');
out += line('M486 627.5H568', '#1c6c1c');
var ripple = '';
for (i = 576; i < 660; i += 12) {
    ripple += ' ' + i + ' 624.5 ' + (i + 4) + ' 623.5';
}
out += line('M568 627L570 624.5' + ripple + ' 658 624.5H662L663.5 620 664.5 376.5 665 375.5H759V379L760 612', GREEN);
out += line('M770 612L772 620.5H784L788 621 796 624.5H853.5L854.5 592 855.5 375.5H949.5L950 470 951.5 627', GREEN);

// tall teeth: [x of the valley, y of the valley, y of the tip]
var tall = [[951, 626, 489], [967, 625, 486], [983, 625, 479], [999, 625, 476], [1015, 625, 476], [1031, 625, 476], [1047, 621, 462], [1062, 621, 462], [1078, 621, 456], [1094, 620, 458], [1110, 620, 452]];
for (i = 0; i < tall.length; i++) {
    var x = tall[i][0], y = tall[i][1], tip = tall[i][2];
    out += line('M' + x + ' ' + y + 'l3 -6 2 -10 2.5 -20', GREEN, 'stroke-dasharray="' + (i % 3 ? '4 2' : '9 1') + '"');
    if (i % 2) {
        out += line('M' + (x + 7.5) + ' ' + (y - 36) + 'L' + (x + 9) + ' ' + (y - 66), i % 4 == 1 ? PINK : GREEN, 'stroke-dasharray="8 3"');
    }
    var up = 'M' + (x + 9) + ' ' + (y - 66) + 'L' + (x + 11) + ' ' + (tip + 40) + 'L' + (x + 13) + ' ' + tip;
    out += line(up, GREEN) + line(up, PINK, 'stroke-dasharray="8 5"') + line('M' + (x + 12.5) + ' ' + (tip + 16) + 'V' + (tip + 34), GREEN);
    var down = 'M' + (x + 13) + ' ' + (tip + 14) + 'L' + (x + 14) + ' ' + (tip + 60) + 'L' + (x + 15.5) + ' ' + (y - 4);
    out += line(down, '#a870a8') + line(down, PINK, 'stroke-dasharray="22 8"');
}
out += line('M1126 620l5 -14 4 -36 3 -32 2 -40 1.5 -122', GREEN);
out += line('M1134 570l6 -70 1.5 -124', PINK, 'stroke-dasharray="10 8"');
out += line('M1141.5 375.5H1236V597L1237.5 627.5', GREEN);

// low teeth: [x of the valley, x of the tip, y of the tip, flat]
var low = [[1238, 1249, 608, 1], [1253, 1265, 606, 1], [1269, 1281, 604, 1], [1285, 1298, 596, 0], [1300, 1314, 577, 0], [1317, 1330, 577, 0], [1333, 1346, 579, 0], [1349, 1362, 585, 0], [1364, 1374, 609, 1], [1380, 1391, 608, 1],
    [1395, 1409, 592, 0], [1412, 1425, 577, 0], [1428, 1441, 577, 0], [1443, 1457, 577, 0], [1459, 1473, 579, 0], [1475, 1489, 585, 0]];
for (i = 0; i < low.length; i++) {
    var p = low[i], end = i + 1 < low.length ? low[i + 1][0] : 1491, mid = (627 + p[2]) / 2;
    out += line('M' + p[0] + ' 627l4 -4 3 -6L' + (p[1] - 4) + ' ' + mid, GREEN, i % 2 ? '' : 'stroke-dasharray="5 2"');
    if (p[3]) {
        out += line('M' + (p[1] - 4) + ' ' + mid + 'L' + (p[1] - 2) + ' ' + (p[2] + 1) + 'H' + (p[1] + 2), i % 2 ? PINK : GREEN, 'stroke-dasharray="6 2"');
    } else {
        out += line('M' + (p[1] - 4) + ' ' + mid + 'L' + (p[1] - 2) + ' ' + (p[2] + 8) + 'L' + p[1] + ' ' + p[2], PINK);
        out += line('M' + (p[1] - 4) + ' ' + (mid - 4) + 'L' + (p[1] - 3) + ' ' + (p[2] + 12.5) + 'h5', GREEN);
    }
    out += line('M' + (p[1] + 1) + ' ' + (p[2] + 2) + 'L' + (end - 1) + ' 627', i % 3 ? PINK : GREEN);
}
out += line('M1412 628.5H1558', '#2a8a7c');
document.getElementById('plot').innerHTML = out + '</g>';

// overview strip
out = '<rect width="1059" height="12" fill="#000"/><rect y="1" width="936" height="9" fill="#404040"/><rect y="1" width="426" height="9" fill="#808000"/>';
var tints = ['#7a5a40', '#404040', '#8a6a58', '#fff', '#fff', '#222', '#808000', '#6a6a20', '#a09048', '#4a4a20', '#808000', '#8890c0', '#50504a', '#9a9a30', '#7070b0', '#c0b8f0', '#604830', '#8a8050', '#403838', '#808000', '#98903c', '#5a5a5a', '#808000', '#a098ff', '#9088e0', '#505020', '#808000', '#343434', '#808030', '#7a7a10', '#4c4c60', '#808000', '#706830'];
for (i = 0; i < tints.length; i++) {
    out += '<rect x="' + (929 + i * 3) + '" y="1" width="3" height="9" fill="' + tints[i] + '"/>';
}
document.getElementById('overview').innerHTML = out;
```
